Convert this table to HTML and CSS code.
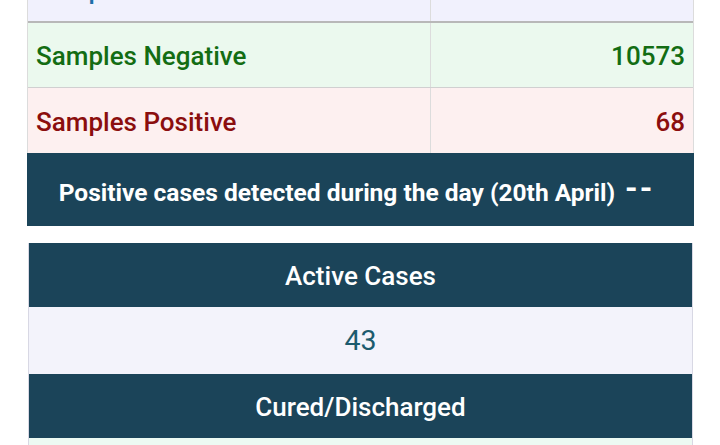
FILE: index.html
```html
<!DOCTYPE html>
<html>
<head>
<meta charset="utf-8">
<link rel="stylesheet" href="styles.css">
</head>
<body>
<div class="page">
  <div class="stats">
    <div class="row row-tested">
      <div class="cell label">Samples Tested</div>
      <div class="cell value">10641</div>
    </div>
    <div class="row row-neg">
      <div class="cell label">Samples Negative</div>
      <div class="cell value">10573</div>
    </div>
    <div class="row row-pos">
      <div class="cell label">Samples Positive</div>
      <div class="cell value">68</div>
    </div>
  </div>
  <div class="daybar">Positive cases detected during the day (20th April) <span class="dash">--</span></div>
  <div class="summary">
    <div class="shead">Active Cases</div>
    <div class="sval">43</div>
    <div class="shead">Cured/Discharged</div>
    <div class="sval sval-green">25</div>
  </div>
</div>
</body>
</html>
```
FILE: styles.css
```css
html, body {
  margin: 0;
  padding: 0;
  background: #ffffff;
  font-family: Roboto, "Noto Sans", sans-serif;
  overflow: hidden;
}
.page {
  width: 667px;
  margin-left: 27px;
}
.stats {
  margin-top: -43px;
  border-left: 1px solid #dcdcdc;
  border-right: 1px solid #dcdcdc;
}
.row {
  display: grid;
  grid-template-columns: 402px 1fr;
  height: 65px;
  border-bottom: 1px solid #d0d0d0;
  box-sizing: border-box;
}
.row-tested { background: #f1f1fd; color: #1e6fa8; border-bottom: 2px solid #b8b8b8; height: 66px; }
.row-neg { background: #ebf9ee; color: #136d13; }
.row-pos { background: #fdf0f0; color: #8b0e0e; border-bottom: none; }
.cell {
  display: flex;
  align-items: center;
  font-size: 26px;
  font-weight: 500;
  padding: 2px 8px 0;
}
.cell.value {
  justify-content: flex-end;
  border-left: 1px solid #dcdcdc;
}
.daybar {
  background: #1b4459;
  color: #ffffff;
  height: 73px;
  display: flex;
  align-items: center;
  justify-content: center;
  font-size: 24.5px;
  font-weight: 700;
  padding: 5px 8px 0 0;
  box-sizing: border-box;
}
.dash {
  margin-left: 10px;
  position: relative;
  top: -4px;
  font-size: 32px;
  letter-spacing: 2px;
}
.summary {
  margin-top: 17px;
  margin-left: 1px;
  width: 665px;
  border-left: 1px solid #d8d8e4;
  border-right: 1px solid #d8d8e4;
  box-sizing: border-box;
}
.shead {
  background: #1b4459;
  color: #ffffff;
  height: 64px;
  display: flex;
  align-items: center;
  justify-content: center;
  font-size: 26px;
  font-weight: 500;
  padding-top: 2px;
  box-sizing: border-box;
}
.sval {
  background: #f3f3fb;
  color: #1c5b6e;
  height: 67px;
  display: flex;
  align-items: center;
  justify-content: center;
  font-size: 28.5px;
  font-weight: 400;
}
.sval-green { background: #edfaf3; }
```
